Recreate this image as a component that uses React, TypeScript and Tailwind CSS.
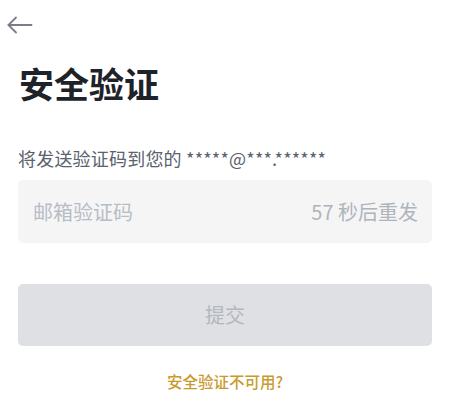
const App = () => {
    return (
        <div
            className="w-[450px] h-[420px] bg-white overflow-hidden"
            style={{ fontFamily: '"Noto Sans CJK SC", "Noto Sans", sans-serif' }}
        >
            {/* Back arrow */}
            <div className="h-[50px] flex items-center pl-[7px]">
                <button type="button" className="text-[#7b7b8c]">
                    <svg width="26" height="18" viewBox="0 0 26 18" fill="none" stroke="currentColor" strokeWidth={1.8} strokeLinecap="round" strokeLinejoin="round">
                        <path d="M1.5 9H24.5" />
                        <path d="M9 1.5L1.5 9L9 16.5" />
                    </svg>
                </button>
            </div>

            <div className="px-[18px]">
                {/* Title */}
                <h1 className="mt-[12px] text-[35px] leading-[42px] font-bold text-[#1e2329] pl-[1px]">
                    安全验证
                </h1>

                {/* Description */}
                <p className="mt-[42px] text-[18px] leading-[24px] tracking-[0.2px] text-[#5a626e]">
                    将发送验证码到您的 *****@***.******
                </p>

                {/* Code input */}
                <div className="mt-[10px] h-[63px] rounded-[5px] bg-[#f5f5f5] flex items-center justify-between pl-[15px] pr-[14px]">
                    <input
                        className="bg-transparent outline-none text-[20px] text-[#1e2329] placeholder:text-[#b7bdc6] flex-1 min-w-0"
                        placeholder="邮箱验证码"
                    />
                    <span className="text-[20px] text-[#aeb4bc]">57 秒后重发</span>
                </div>

                {/* Submit */}
                <button
                    type="button"
                    disabled
                    className="mt-[41px] w-full h-[62px] rounded-[5px] bg-[#dfe0e4] text-[20px] text-[#b3b7bf]"
                >
                    提交
                </button>

                {/* Link */}
                <div className="mt-[23px] text-center">
                    <a className="text-[15.5px] font-medium text-[#c99b2e]">安全验证不可用?</a>
                </div>
            </div>
        </div>
    );
};

export default App;
